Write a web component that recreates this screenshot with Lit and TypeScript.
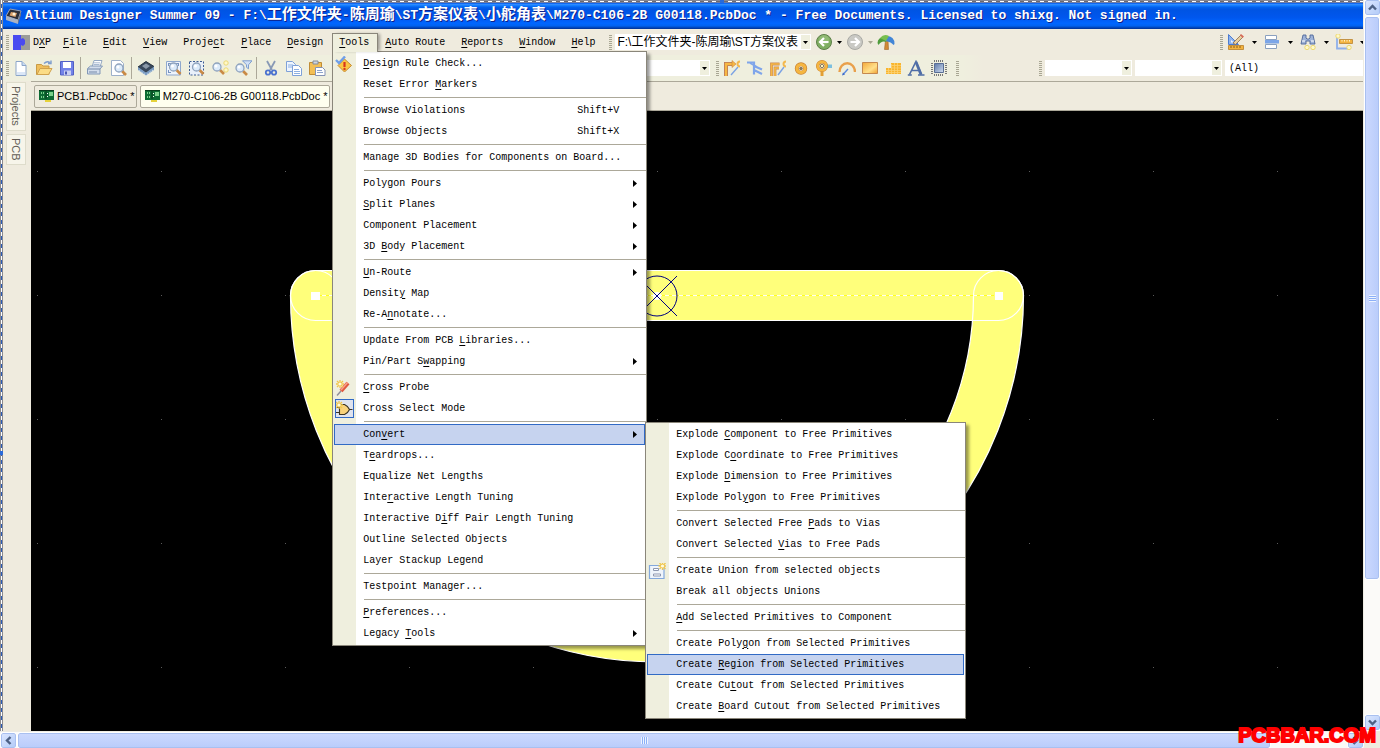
import { LitElement, html, svg, css, nothing, TemplateResult } from "lit";
import { customElement } from "lit/decorators.js";
import { classMap } from "lit/directives/class-map.js";

interface MenuEntry {
  label: string;
  keys?: string;
  icon?: string;
  pressed?: boolean;
  more?: boolean;
  active?: boolean;
  items?: Entry[];
}
type Entry = MenuEntry | "-";

const CONVERT: Entry[] = [
  { label: "Explode &Component to Free Primitives" },
  { label: "Explode C&oordinate to Free Primitives" },
  { label: "Explode &Dimension to Free Primitives" },
  { label: "Explode Pol&ygon to Free Primitives" },
  "-",
  { label: "Convert Selected Free &Pads to Vias" },
  { label: "Convert Selected &Vias to Free Pads" },
  "-",
  { label: "Create Union from selected objects", icon: "union" },
  { label: "Break all objects Unions" },
  "-",
  { label: "&Add Selected Primitives to Component" },
  "-",
  { label: "Create Poly&gon from Selected Primitives" },
  { label: "Create &Region from Selected Primitives", active: true },
  { label: "Create Cu&tout from Selected Primitives" },
  { label: "Create &Board Cutout from Selected Primitives" },
];

const TOOLS: Entry[] = [
  { label: "&Design Rule Check...", icon: "drc" },
  { label: "Reset Error &Markers" },
  "-",
  { label: "Browse Violations", keys: "Shift+V" },
  { label: "Browse Objects", keys: "Shift+X" },
  "-",
  { label: "Manage 3D Bodies for Components on Board..." },
  "-",
  { label: "Polygon Pours", more: true },
  { label: "&Split Planes", more: true },
  { label: "Component Placement", more: true },
  { label: "3D &Body Placement", more: true },
  "-",
  { label: "&Un-Route", more: true },
  { label: "Densit&y Map" },
  { label: "Re-A&nnotate..." },
  "-",
  { label: "Update From PCB &Libraries..." },
  { label: "Pin/Part S&wapping", more: true },
  "-",
  { label: "&Cross Probe", icon: "probe" },
  { label: "Cross Select Mode", icon: "gate", pressed: true },
  "-",
  { label: "Con&vert", more: true, active: true, items: CONVERT },
  { label: "T&eardrops..." },
  { label: "Equalize Net Lengths" },
  { label: "Inte&ractive Length Tuning" },
  { label: "Interactive D&iff Pair Length Tuning" },
  { label: "Outline Selected Objects" },
  { label: "Layer Stackup Legend" },
  "-",
  { label: "Testpoint Manager..." },
  "-",
  { label: "&Preferences..." },
  { label: "Legacy &Tools", more: true },
];

const lens = (x: number, y: number) => svg`
  <path d="M${x + 3} ${y + 3}l4 4" stroke="#c98a45" stroke-width="2.6"/>
  <circle cx=${x} cy=${y} r="4" fill="#dcebfa" stroke="#8fa3bd" stroke-width="1.3"/>
  <circle cx=${x - 1} cy=${y - 1} r="1.5" fill="#fff"/>`;

const sparkle = (x: number, y: number) => svg`
  <circle cx=${x} cy=${y} r="2.2" fill="#fff8c8" stroke="#ecd873" stroke-width="1"/>`;

const burst = (x: number, y: number) => svg`
  <path d="M${x - 4} ${y}h8M${x} ${y - 4}v8M${x - 3} ${y - 3}l6 6M${x + 3} ${y - 3}l-6 6" stroke="#f2c648" stroke-width="1.3"/>
  <circle cx=${x} cy=${y} r="1.6" fill="#fffbe0"/>`;

const ICONS: Record<string, TemplateResult> = {
  fresh: svg`<path d="M4 1.500h6l4 4v10h-10z" fill="#fff" stroke="#8ba5c9"/><path d="M10 1.500v4h4" fill="#c7daf2" stroke="#8ba5c9"/><path d="M5 12h8v3h-8z" fill="#dbe7f7"/>`,
  open: svg`<path d="M1.500 14.500v-10h5l1.500 1.500h6v8.500z" fill="#f0bf5c" stroke="#c99a45"/><path d="M2 14.500l3-6h12l-3.500 6z" fill="#fbdc86" stroke="#d0a24e"/><path d="M9 3.500q3-3 6-1M16 .5v3h-3" fill="none" stroke="#7d9dcd" stroke-width="1.400"/>`,
  save: svg`<path d="M2.500 1.500h13v13.500h-13z" fill="#7282e8" stroke="#5260c4"/><path d="M5 2h8v6h-8z" fill="#fff"/><path d="M6 10.500h7v4.500h-7z" fill="#c9cff2"/><path d="M7 11.500h2v3h-2z" fill="#4a57b5"/>`,
  print: svg`<path d="M6 7l2-6.500h8l-2 6.500z" fill="#fff" stroke="#93a7c2"/><path d="M1.500 8.500l3-2.500h12l-2.500 3v5h-12.500z" fill="#d4deed" stroke="#8298b6"/><path d="M2 9h12M3 12h8" stroke="#7489a8"/><path d="M8 2.800h6M7.500 4.500h6" stroke="#a8bad2"/>`,
  preview: svg`<path d="M2.500 .5h9l3 3v12h-12z" fill="#fff" stroke="#9db0ca"/>${lens(10, 8)}`,
  chip: svg`<path d="M1 7l8-5.500 8 5-8 6z" fill="#39485c" stroke="#27333f"/><path d="M1 7v3l8 5.500v-3zM17 6.500v3.500l-8 5.500v-3z" fill="#7b9cc2"/><path d="M5 6l4-2.500 4 2.500-4 3z" fill="#8a98a8"/><path d="M2 10.500l6 4M16 10l-6 4.500" stroke="#cfe0f2" stroke-dasharray="1.500 1.500"/>`,
  zoomdoc: svg`<path d="M1.500 1.500h14v13.500h-14z" fill="#eef4fc" stroke="#8fa8cd"/><path d="M3 3h3v1h-2v2h-1zM11 3h3v3h-1v-2h-2zM3 10h1v2h2v1h-3z" fill="#7794c0"/>${lens(8.500, 7)}`,
  zoomarea: svg`<path d="M1.500 1.500h14v13.500h-14z" fill="#e9f0fa" stroke="#3d5d94" stroke-dasharray="2 1.500"/>${lens(8.500, 7)}`,
  zoomsel: svg`${lens(6, 7)}${sparkle(15, 3)}${sparkle(15, 10)}`,
  zoomfilter: svg`${lens(6, 8)}<path d="M8.500 .8h9.500l-3.500 4v4l-2-1.500v-2.500z" fill="#cfe0f6" stroke="#7f9fcf"/>`,
  cut: svg`<path d="M5 1l5 9M13 1l-5 9" stroke="#8899b5" stroke-width="1.800"/><circle cx="6" cy="12.500" r="2.200" fill="none" stroke="#4b72cf" stroke-width="1.800"/><circle cx="12" cy="12.500" r="2.200" fill="none" stroke="#4b72cf" stroke-width="1.800"/>`,
  copy: svg`<path d="M1.500 1.500h6l3 3v7h-9z" fill="#eef5fe" stroke="#7ea1d8"/><path d="M7.500 5.500h6l3 3v7h-9z" fill="#fff" stroke="#7ea1d8"/><path d="M3 5h5M3 7h4M9 9.500h5M9 11.500h6M9 13.500h6" stroke="#8db0e2"/>`,
  paste: svg`<path d="M1.500 2.500h12v12h-12z" fill="#f3bf55" stroke="#c08c35"/><path d="M5 1h5v3h-5z" fill="#cfd6e0" stroke="#838c9b"/><path d="M7.500 7.500h7l2.500 2.500v5.500h-9.500z" fill="#fff" stroke="#8593b5"/><path d="M9 10.500h5M9 12.500h6" stroke="#8ea4cc"/>`,
  route: svg`<path d="M3 16v-12h7" fill="none" stroke="#b6775a" stroke-width="4"/><path d="M3 16v-12h7" fill="none" stroke="#f7b844" stroke-width="2.400"/><path d="M9 .5l4 3.500-4 3.500z" fill="#f7b844" stroke="#c98445" stroke-width=".6"/><path d="M8 15l7-8" stroke="#7aa2e4" stroke-width="1.400"/><path d="M17 1.500a2.500 2.500 0 1 0 0 5" fill="none" stroke="#f3b84e" stroke-width="2"/>`,
  multi: svg`<path d="M1 2.500h7v12M8 6l8 3.500M8 10l8 4" fill="none" stroke="#7fa5ea" stroke-width="2.200"/><path d="M4 3l7 4" fill="none" stroke="#7fa5ea" stroke-width="1.600"/>`,
  diff: svg`<path d="M2.500 16v-12h8M6 16v-8h4" fill="none" stroke="#c98a5a" stroke-width="2.800"/><path d="M2.500 16v-12h8M6 16v-8h4" fill="none" stroke="#f7b844" stroke-width="1.600"/><path d="M9 15l6-8" stroke="#7aa2e4" stroke-width="1.400"/><path d="M17 1.500a2.500 2.500 0 1 0 0 5" fill="none" stroke="#f3b84e" stroke-width="2"/>`,
  pad: svg`<circle cx="9" cy="8.500" r="4.200" fill="#fff" stroke="#c98335" stroke-width="4"/><circle cx="9" cy="8.500" r="4" fill="none" stroke="#f5b640" stroke-width="3"/><circle cx="9" cy="8.500" r="1.800" fill="#8a7a5a"/>`,
  via: svg`<path d="M10 4.500h7v3.500h-7z" fill="#7cc0e0"/><path d="M5.500 9h3v7h-3z" fill="#e3a034"/><circle cx="7" cy="6" r="4.300" fill="none" stroke="#c98335" stroke-width="3.400"/><circle cx="7" cy="6" r="4.300" fill="none" stroke="#f5b640" stroke-width="2.400"/><circle cx="7" cy="6" r="1.700" fill="#fff2c0" stroke="#8a7a5a"/>`,
  arc: svg`<path d="M1.500 12a7.500 8.500 0 0 1 15.500 0" fill="none" stroke="#e9a04b" stroke-width="2.400"/><path d="M5 14.500l5-5.500" stroke="#5a8ae0" stroke-width="1.400"/><path d="M4 15.500l1-3 2 2z" fill="#3d6cc8"/>`,
  fill: svg`<defs><linearGradient id="fillg" x2="1" y2="1"><stop offset="0" stop-color="#f4a838"/><stop offset=".6" stop-color="#ffe08a"/><stop offset="1" stop-color="#f0a030"/></linearGradient></defs><path d="M1.500 2.500h15v11h-15z" fill="url(#fillg)" stroke="#c5884e"/>`,
  poly: svg`<path d="M2 14v-6h5v-5h10v11z" fill="#f9b52e"/><path d="M2 10.500h15M2 12.500h15M7 5.500h10M7 8h10M4.500 8v6M7.500 4v10M10.500 3v11M13.500 3v11" stroke="#fbd274" stroke-width=".8"/>`,
  letter: svg`<path d="M2.500 14.500L9 1.500l5.500 13M5 10.500h7" fill="none" stroke="#4f6da6" stroke-width="1.600"/><path d="M9 2l5 12.500" stroke="#4f6da6" stroke-width="2.800"/><path d="M.8 15h4M11 15h6.500" stroke="#4f6da6" stroke-width="1.400"/>`,
  comp: svg`<defs><linearGradient id="compg" x2="1" y2="1"><stop offset="0" stop-color="#5d78a8"/><stop offset="1" stop-color="#d2def0"/></linearGradient></defs><path d="M4.500 3.500h9v9h-9z" fill="url(#compg)" stroke="#5a6f96"/><path d="M4 1h10M4 15h10" stroke="#777" stroke-width="2" stroke-dasharray="1 1"/><path d="M2 3v11M16 3v11" stroke="#777" stroke-width="2" stroke-dasharray="1 1"/>`,
  ruler: svg`<path d="M1.500 .5v10h10z" fill="#8fb4ee" stroke="#4d7cd0"/><path d="M4 6v2.500h3z" fill="#eef4ff"/><path d="M6 9l8-8 2 2-7.500 7.500z" fill="#e8cfa0" stroke="#8b6a48" stroke-width=".8"/><path d="M14 0l3 2.500-1.500 1.500-2.500-3z" fill="#d86a58"/><path d="M1.500 11.500h15v4h-15z" fill="#f3b33f" stroke="#b77f2a" stroke-width=".8"/><path d="M4 12v2M7 12v2M10 12v2M13 12v2" stroke="#8a5c18"/>`,
  align: svg`<path d="M2.500 1.500h11v4h-11zM2.500 10.500h11v4h-11z" fill="#fff" stroke="#8aa0bf"/><path d="M2 6h14v3.500h-14z" fill="#7ba5e8"/>`,
  binoc: svg`<path d="M4 1h3v3l1 1h2l1-1v-3h3l2 9h-5v-3h-4v3h-5z" fill="#9fb3d8" stroke="#4e6699" stroke-width=".9"/><path d="M3 7h3M12 7h3" stroke="#fff"/>${sparkle(8, 13.500)}${sparkle(14, 13.500)}`,
  dim: svg`<path d="M2 3v11.500h13" fill="none" stroke="#8fb0ea" stroke-width="1.800"/><path d="M4.500 5.500h13v4h-13z" fill="#f3b33f" stroke="#b98431" stroke-width=".8"/><path d="M7 6v1.500M9.500 6v1.500M12 6v1.500M14.500 6v1.500" stroke="#fff3c8"/>${sparkle(3, 2)}${sparkle(14, 13.500)}`,
  back: svg`<circle cx="9" cy="8" r="7.500" fill="#7fae62" stroke="#5d7f48"/><circle cx="9" cy="6" r="5" fill="#a4c888" opacity=".5"/><path d="M13.500 8h-8M9 4l-4 4 4 4" fill="none" stroke="#fff" stroke-width="2.200"/>`,
  ahead: svg`<circle cx="9" cy="8" r="7.500" fill="#c9c9c4" stroke="#a9a9a4"/><path d="M4.500 8h8M9 4l4 4-4 4" fill="none" stroke="#fff" stroke-width="2.200"/>`,
  home: svg`<path d="M8.500 6h2.500l.5 9.500h-4z" fill="#d28a35" stroke="#a0642a" stroke-width=".6"/><path d="M.5 9q0-6 8-6l1 5q-5-2-8 3z" fill="#4f9c3c"/><path d="M17.500 10q0-8-8-8l-1 5q6 1 8 4z" fill="#4285d6"/><path d="M3 4q4-5 9-2l-3 5z" fill="#78bf4f"/>`,
  drc: svg`<path d="M9.500 3l7 6.500-7 6.500-6.500-6.500z" fill="#fbc744" stroke="#c48a35"/><path d="M9.500 6v5" stroke="#d8361c" stroke-width="2.200"/><circle cx="9.500" cy="13" r="1.200" fill="#d8361c"/><path d="M1 4l3 3 6-6.500" fill="none" stroke="#6f9fe8" stroke-width="2.400"/>`,
  probe: svg`<path d="M2 15.500l4-4.500" stroke="#8f8f98" stroke-width="1.400"/><path d="M6 11l7-8" stroke="#e0583e" stroke-width="4"/><path d="M6 10l6.500-7.500" stroke="#f8a088" stroke-width="1.600"/>${burst(5, 4)}`,
  gate: svg`<path d="M4.500 3.500h5q3.500 1.500 5 5q-1.500 3.500-5 5h-5z" fill="#f9d27a" stroke="#3b3324" stroke-width="1.100"/><path d="M14.500 8.500h3M0 6.500h4.500M0 11.500h4.500" stroke="#3b3324"/>${burst(4, 4)}`,
  union: svg`<path d="M1.500 2.500h14.500v13h-14.500z" fill="#eff4fb" stroke="#83a8dc" stroke-width="1.200"/><path d="M5.500 5.500h5v2h-5zM5.500 11h7v2h-7z" fill="#fff" stroke="#8d97b0"/>${burst(14.500, 3)}`,
};

const icon = (name: string) =>
  html`<svg class="icon" viewBox="0 0 18 16" aria-hidden="true">${ICONS[name]}</svg>`;

const caret = (cls = "") =>
  html`<svg class="caret ${cls}" viewBox="0 0 5 3" aria-hidden="true"><path d="M0 0h5l-2.500 3z" fill="currentColor" /></svg>`;

const mnemonic = (text: string) => {
  const at = text.indexOf("&");
  return at < 0
    ? html`${text}`
    : html`${text.slice(0, at)}<u>${text[at + 1]}</u>${text.slice(at + 2)}`;
};

const chevron = (d: string) =>
  html`<svg viewBox="0 0 9 9" width="9" height="9" aria-hidden="true"><path d=${d} fill="none" stroke="#4d6185" stroke-width="2.400" /></svg>`;

const boardIcon = html`<svg class="board-icon" viewBox="0 0 16 12" aria-hidden="true">
  <path d="M0 0h15v10h-15z" fill="#0d6b33" /><path d="M6 10h6v2h-6z" fill="#e6d23a" />
  <path d="M2 2h1v2h-1zM4 2h1v2h-1zM2 6h1v2h-1zM4 6h1v2h-1zM10 2h4v4h-4z" fill="#79d08a" />
  <path d="M7 1v8M0 .5h15" stroke="#063d1c" /><path d="M8 3h1v1h-1zM8 6h1v1h-1z" fill="#fff" />
</svg>`;

const GRID_X = Array.from({ length: 11 }, (_, i) => 37 + i * 124);
const GRID_Y = [171, 295, 419, 543, 667];

@customElement("app-root")
export class AppRoot extends LitElement {
  static styles = css`
    :host {
      display: grid;
      grid-template: minmax(0, 1fr) 17px / minmax(0, 1fr) 17px;
      height: 100vh;
      position: relative;
      overflow: hidden;
      background: #efebde;
      color: #000;
      font: 10px/14px "Liberation Mono", "Noto Sans CJK SC", monospace;
    }
    * { box-sizing: border-box; }
    button, input, select {
      font: inherit;
      color: inherit;
      background: none;
      border: 0;
      border-radius: 0;
      margin: 0;
      padding: 0;
      appearance: none;
    }
    ul { list-style: none; margin: 0; padding: 0; }
    u { text-decoration: underline; text-underline-offset: 2px; text-decoration-thickness: 1px; }
    .window {
      display: flex;
      flex-direction: column;
      min-width: 0;
      padding: 3px 0 0 3px;
      background:
        linear-gradient(#2a6ad8, #2a6ad8) 0 62% / 3px 4px no-repeat,
        linear-gradient(#2a6ad8, #2a6ad8) 53% 0 / 4px 3px no-repeat,
        linear-gradient(#8a8a90, #8a8a90) 0 0 / 1px 100% no-repeat,
        linear-gradient(#8a8a90, #8a8a90) 2px 0 / 1px 100% no-repeat,
        repeating-linear-gradient(#fff 0 4px, #2a5cb8 4px 8px) 1px 0 / 1px 100% no-repeat,
        repeating-linear-gradient(90deg, #fff 0 4px, #6c6a70 4px 8px) 0 1px / 100% 1px no-repeat,
        linear-gradient(#8a8a90, #6a7aa8) 0 0 / 100% 3px no-repeat,
        #efebde;
    }
    .title {
      display: flex;
      align-items: center;
      gap: 3px;
      height: 26px;
      flex: none;
      padding-left: 2px;
      background: linear-gradient(#0058ee 0, #2f8cff 6%, #127dff 10%, #0262ee 16%, #0054e3 26%, #0057ee 56%, #0066ff 78%, #0062f0 88%, #0048c0 94%, #003092 100%);
    }
    .title h1 {
      margin: 0;
      color: #fff;
      font-size: 13px;
      line-height: 20px;
      font-weight: bold;
      white-space: pre;
      text-shadow: 1px 1px #0f2089;
    }
    .title .han { font-size: 15px; line-height: 15px; }
    .app-icon { width: 17px; height: 17px; }
    .bar { display: flex; align-items: center; height: 26px; flex: none; padding-left: 3px; }
    .bar.tools { background: linear-gradient(90deg, #efefde, #efefde 960px, #efebde 980px); }
    .grip {
      width: 3px;
      height: 15px;
      flex: none;
      background: repeating-linear-gradient(#a8a693 0 1px, transparent 1px 2px);
    }
    .logo { width: 17px; height: 15px; margin-left: 4px; margin-right: -4px; }
    .menubar { display: flex; align-self: flex-start; padding-top: 4px; }
    .menubar > li { position: relative; }
    .top {
      display: block;
      height: 19px;
      border: 1px solid transparent;
      border-bottom: 0;
      padding: 0 8px 0 6px;
      white-space: nowrap;
      line-height: 18px;
    }
    .top.dxp { padding-right: 4px; }
    .top.open { position: relative; z-index: 3; background: #efefde; border-color: #8a867a; box-shadow: 3px 0 3px -1px #0005; }
    .menu {
      position: absolute;
      z-index: 2;
      padding: 1px;
      border: 1px solid #8a867a;
      background: linear-gradient(90deg, #efefde 23px, #fff 23px);
      box-shadow: 3px 3px 3px #0006;
    }
    .menu.main { left: 0; top: 18px; width: 315px; }
    .menu.sub { left: 100%; top: -2px; width: 321px; }
    .menu > li { position: relative; }
    .menu > .rule { height: 5px; padding: 2px 0; margin: 0 -1px 0 30px; }
    .rule hr { margin: 0; border: 0; height: 1px; background: #aca899; }
    .item {
      display: flex;
      align-items: center;
      width: 100%;
      height: 21px;
      border: 1px solid transparent;
      text-align: left;
      white-space: nowrap;
    }
    .item.active { background: #c6d3ef; border-color: #316ac5; }
    .slot { width: 28px; height: 19px; flex: none; display: flex; align-items: center; }
    .pressed { background: #dfe3ee; outline: 1px solid #316ac5; outline-offset: -1px; width: 19px; height: 19px; display: flex; align-items: center; }
    .text { flex: 1; }
    .more { width: 25px; flex: none; padding-left: 14px; display: flex; }
    .icon { display: block; width: 18px; height: 16px; flex: none; }
    .tool { width: 23px; height: 22px; display: flex; align-items: center; justify-content: center; flex: none; }
    .split { width: 5px; height: 22px; flex: none; border-right: 2px solid transparent; border-left: 2px solid transparent; background: #aca899; background-clip: padding-box; }
    .combo { display: grid; grid-template-columns: minmax(0, 1fr) 9px; height: 16px; background: #fff; flex: none; color: #000; padding-right: 1px; }
    .combo select { grid-area: 1 / 1 / 2 / 3; min-width: 0; width: 100%; padding: 0 10px 0 2px; font: 12px/16px "Liberation Sans", "Noto Sans CJK SC", sans-serif; }
    .combo .drop { grid-area: 1 / 2; background: #efefde; display: flex; align-items: center; justify-content: center; pointer-events: none; margin: 1px 0; }
    .caret { width: 5px; height: 3px; display: block; flex: none; }
    .caret.dim { color: #a8a693; }
    .path { width: 196px; margin-left: 3px; margin-right: 1px; }
    .hist { width: 8px; height: 16px; display: flex; align-items: center; justify-content: center; flex: none; }
    .nav { display: flex; align-items: center; margin-left: 5px; }
    .right { display: flex; align-items: center; margin-left: auto; }
    .right.clipped { margin-right: -4px; }
    .right .tool { width: 26px; }
    .right .hist { width: 10px; }
    .layer { width: 366px; margin: 0 6px 0 16px; }
    .style { width: 87px; margin-left: 3px; }
    .place { display: flex; padding-left: 1px; padding-right: 6px; }
    .filter { width: 138px; height: 16px; margin-left: 3px; padding: 0 4px; background: #fff; }
    .body { flex: 1; min-height: 0; display: flex; }
    .side { width: 28px; flex: none; padding: 1px 5px 0 3px; display: flex; flex-direction: column; gap: 3px; }
    .side button {
      writing-mode: vertical-rl;
      width: 20px;
      padding: 3px 0 4px;
      border: 1px solid #dedccb;
      background: #f7f5ea;
      color: #625d55;
      font: 11px/18px "Liberation Sans", sans-serif;
    }
    .docs { flex: 1; min-width: 0; display: flex; flex-direction: column; }
    .tabs { display: flex; align-items: center; gap: 3px; height: 30px; flex: none; padding-left: 3px; border-top: 1px solid #aca899; border-bottom: 1px solid #aca899; }
    .tab {
      display: flex;
      align-items: center;
      gap: 2px;
      height: 23px;
      padding: 0 1px 0 4px;
      border: 1px solid #aca899;
      border-radius: 2px;
      font: 11px/14px "Liberation Sans", sans-serif;
      white-space: nowrap;
    }
    .tab.current { background: #ffffef; }
    .board-icon { width: 16px; height: 12px; }
    .canvas { flex: 1; min-height: 0; background: #000; overflow: hidden; }
    .canvas svg { display: block; width: 100%; height: 100%; }
    .scroll { display: flex; background: #fbfaf8; position: relative; }
    .scroll.v { flex-direction: column; padding: 0 1px 1px; border-left: 1px solid #eeece4; }
    .scroll.h { padding: 1px 0 0 1px; border-top: 1px solid #eeece4; }
    .scroll button, .thumb {
      display: flex;
      align-items: center;
      justify-content: center;
      flex: none;
      border: 1px solid #a9c0f0;
      border-radius: 2px;
      outline: 1px solid #fff;
    }
    .scroll button { width: 15px; height: 15px; background: linear-gradient(135deg, #dbe6ff, #b4ccf8); }
    .v .thumb { height: 562px; margin-top: 2px; background: linear-gradient(90deg, #cbd8fe, #bacdfb); }
    .h .thumb { width: 1252px; margin-left: 2px; background: linear-gradient(#cbd8fe, #bacdfb); }
    .gap { flex: 1; }
    .ridge { width: 7px; height: 7px; }
    .v .ridge { background: repeating-linear-gradient(#eef4fe 0 1px, #8cb0f8 1px 2px); }
    .h .ridge { background: repeating-linear-gradient(90deg, #eef4fe 0 1px, #8cb0f8 1px 2px); }
    .mark {
      position: absolute;
      right: 4px;
      bottom: 2px;
      z-index: 5;
      color: #f00;
      font: bold 20px/22px "Liberation Sans", sans-serif;
      -webkit-text-stroke: 2px #f00;
    }
  `;

  private entry(e: Entry): TemplateResult {
    if (e === "-") return html`<li class="rule" role="separator"><hr /></li>`;
    return html`<li role="none">
      <button class=${classMap({ item: true, active: !!e.active })} role="menuitem">
        <span class="slot">
          ${e.icon ? (e.pressed ? html`<span class="pressed">${icon(e.icon)}</span>` : icon(e.icon)) : nothing}
        </span>
        <span class="text">${mnemonic(e.label)}</span>
        ${e.keys ? html`<span>${e.keys}</span>` : nothing}
        <span class="more">${e.more
          ? html`<svg width="4" height="7" viewBox="0 0 4 7" aria-hidden="true"><path d="M0 0l4 3.500-4 3.500z" /></svg>`
          : nothing}</span>
      </button>
      ${e.items ? html`<ul class="menu sub" role="menu">${e.items.map((i) => this.entry(i))}</ul>` : nothing}
    </li>`;
  }

  private top(label: string, cls = "") {
    return html`<li role="none"><button class="top ${cls}" role="menuitem">${mnemonic(label)}</button></li>`;
  }

  private combo(cls: string, label: string, value = "") {
    return html`<span class="combo ${cls}">
      <select aria-label=${label}><option>${value}</option></select>
      <span class="drop">${caret()}</span>
    </span>`;
  }

  private tool(name: string) {
    return html`<button class="tool" aria-label=${name}>${icon(name)}</button>`;
  }

  private drop(name: string, cls = "") {
    return html`${this.tool(name)}<button class="hist" aria-label="${name} list">${caret(cls)}</button>`;
  }

  private board() {
    return html`<svg viewBox="31 111 1332 620" preserveAspectRatio="xMinYMin slice" role="img" aria-label="PCB layout">
      <g fill="#5a5a5a">
        ${GRID_Y.map((y) => GRID_X.map((x) => svg`<rect x=${x} y=${y} width="1" height="1"/>`))}
      </g>
      <g fill="none" stroke="#ffff7b" stroke-linecap="round" stroke-width="50">
        <path d="M315.500 295.500H998.500" />
        <path d="M998.500 295.500A341.500 341.500 0 0 1 315.500 295.500" />
      </g>
      <g fill="none" stroke="#fff" stroke-width="1.200">
        <path d="M315.500 270.500H998.500a25 25 0 0 1 0 50H315.500a25 25 0 0 1 0-50z" />
        <path d="M973.500 295.500a25 25 0 0 1 50 0A366.500 366.500 0 0 1 290.500 295.500a25 25 0 0 1 50 0A316.500 316.500 0 0 0 973.500 295.500z" />
      </g>
      <path d="M315 295.500H994" stroke="#ffff20" />
      <path d="M315 295.500H994" stroke="#fffff0" stroke-dasharray="4 3" />
      <path d="M311 292h9v8h-9zM995 292h8v8h-8z" fill="#fff" />
      <circle cx="657" cy="296" r="4" fill="#fff" />
      <g fill="none" stroke="#000080">
        <circle cx="657" cy="296" r="20" />
        <path d="M637 276l40 40M677 276l-40 40" />
      </g>
    </svg>`;
  }

  render() {
    return html`
      <div class="window">
        <header class="title">
          <svg class="app-icon" viewBox="0 0 17 17" aria-hidden="true">
            <path d="M1 8l4-7 11 2-3 9z" fill="#2c2f38" stroke="#9aa3b5" /><path d="M1 8l12 4v4l-12-4z" fill="#a9b2c2" />
            <path d="M13 12l3-9v4l-3 9z" fill="#6d7686" /><path d="M6 4l6 1-1.500 4-6-1.500z" fill="#d9a06a" />
            <circle cx="9" cy="6" r="1.500" fill="#fff2d8" />
          </svg>
          <h1>Altium Designer Summer 09 - F:\\<span class="han">工作文件夹</span>-<span class="han">陈周瑜</span>\\ST<span class="han">方案仪表</span>\\<span class="han">小舵角表</span>\\M270-C106-2B G00118.PcbDoc * - Free Documents. Licensed to shixg. Not signed in.</h1>
        </header>

        <div class="bar">
          <span class="grip"></span>
          <svg class="logo" viewBox="0 0 17 15" aria-hidden="true">
            <path d="M8 0h9v15h-9z" fill="#9c9c98" />
            <path d="M0 0h8v4l2-1 2 2v4l-2 2-2-1v5h-8z" fill="#4a4af0" />
          </svg>
          <ul class="menubar" role="menubar">
            ${this.top("D&XP", "dxp")} ${this.top("&File")} ${this.top("&Edit")} ${this.top("&View")}
            ${this.top("Proje&ct")} ${this.top("&Place")} ${this.top("&Design")}
            <li role="none">
              <button class="top open" role="menuitem" aria-expanded="true">${mnemonic("&Tools")}</button>
              <ul class="menu main" role="menu">${TOOLS.map((i) => this.entry(i))}</ul>
            </li>
            ${this.top("&Auto Route")} ${this.top("&Reports")} ${this.top("&Window")} ${this.top("&Help")}
          </ul>
          <div class="nav">
            <span class="grip"></span>
            ${this.combo("path", "Location", "F:\\工作文件夹-陈周瑜\\ST方案仪表")}
            ${this.drop("back")}${this.drop("ahead", "dim")}${this.tool("home")}
          </div>
          <div class="right clipped">
            <span class="grip"></span>
            ${this.drop("ruler")}${this.drop("align")}${this.drop("binoc")}${this.drop("dim")}
          </div>
        </div>

        <div class="bar tools">
          <span class="grip"></span><span></span>
          ${["fresh", "open", "save"].map((n) => this.tool(n))}<span class="split"></span>
          ${["print", "preview"].map((n) => this.tool(n))}<span class="split"></span>
          ${this.tool("chip")}<span class="split"></span>
          ${["zoomdoc", "zoomarea", "zoomsel", "zoomfilter"].map((n) => this.tool(n))}<span class="split"></span>
          ${["cut", "copy", "paste"].map((n) => this.tool(n))}
          ${this.combo("layer", "Layer set")}
          <span class="grip"></span>
          <div class="place">
            ${["route", "multi", "diff", "pad", "via", "arc", "fill", "poly", "letter", "comp"].map((n) => this.tool(n))}
          </div>
          <span class="grip"></span>
          <div class="right">
            <span class="grip"></span>
            ${this.combo("style", "Filter net")}${this.combo("style", "Filter component")}
            <input class="filter" aria-label="Filter" value="(All)" />
          </div>
        </div>

        <div class="body">
          <nav class="side"><button>Projects</button><button>PCB</button></nav>
          <main class="docs">
            <div class="tabs" role="tablist">
              <button class="tab" role="tab">${boardIcon}PCB1.PcbDoc *</button>
              <button class="tab current" role="tab" aria-selected="true">${boardIcon}M270-C106-2B G00118.PcbDoc *</button>
            </div>
            <div class="canvas">${this.board()}</div>
          </main>
        </div>
      </div>

      <div class="scroll v">
        <button aria-label="Scroll up">${chevron("M1 6.500l3.500-3.500 3.500 3.500")}</button>
        <div class="thumb"><span class="ridge"></span></div>
        <div class="gap"></div>
        <button aria-label="Scroll down">${chevron("M1 2.500l3.500 3.500 3.500-3.500")}</button>
      </div>
      <div class="scroll h">
        <button aria-label="Scroll left">${chevron("M6.500 1l-3.500 3.500 3.500 3.500")}</button>
        <div class="thumb"><span class="ridge"></span></div>
        <div class="gap"></div>
        <button aria-label="Scroll right">${chevron("M2.500 1l3.500 3.500-3.500 3.500")}</button>
      </div>
      <div class="mark">PCBBAR.COM</div>
    `;
  }
}
